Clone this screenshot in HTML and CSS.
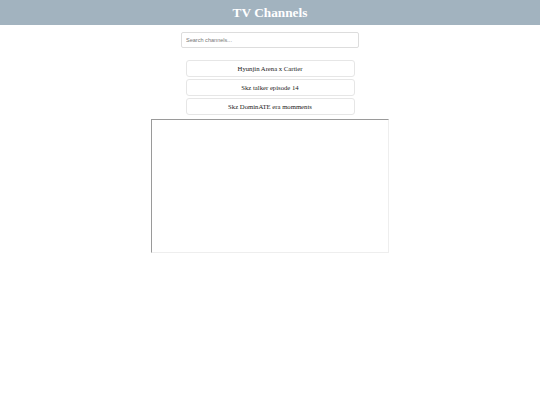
FILE: index.html
```html
<!DOCTYPE html>
<html lang="en">
<head>
<meta charset="utf-8">
<title>TV Channels</title>
<link rel="stylesheet" href="styles.css">
</head>
<body>
<header class="topbar">
  <h1 class="title">TV Channels</h1>
</header>
<main class="content">
  <input class="search" type="text" placeholder="Search channels...">
  <div class="channels">
    <button class="channel">Hyunjin Arena x Cartier</button>
    <button class="channel">Skz talker episode 14</button>
    <button class="channel">Skz DominATE era momments</button>
  </div>
  <iframe class="player" title="player"></iframe>
</main>
</body>
</html>
```

FILE: styles.css
```css
html, body {
  margin: 0;
  padding: 0;
  background: #ffffff;
}

body {
  font-family: "Liberation Serif", "Times New Roman", serif;
}

.topbar {
  height: 25px;
  background: #a2b3bf;
  display: flex;
  align-items: center;
  justify-content: center;
}

.title {
  margin: 0;
  color: #ffffff;
  font-size: 13.3px;
  font-weight: bold;
  line-height: 1;
}

.content {
  display: flex;
  flex-direction: column;
  align-items: center;
}

.search {
  box-sizing: border-box;
  margin-top: 7px;
  width: 178px;
  height: 16px;
  padding: 0 0 0 4px;
  border: 1px solid #dddddd;
  border-radius: 2px;
  font-family: "Liberation Sans", Arial, sans-serif;
  font-size: 5.55px;
  outline: none;
}

.search::placeholder {
  color: #777777;
}

.channels {
  margin-top: 12px;
  display: flex;
  flex-direction: column;
  gap: 2px;
}

.channel {
  box-sizing: border-box;
  width: 169px;
  height: 17px;
  padding: 0;
  border: 1px solid #e6e6e6;
  border-radius: 3px;
  background: #ffffff;
  color: #222222;
  font-family: "Liberation Serif", "Times New Roman", serif;
  font-size: 6.7px;
}

.player {
  box-sizing: border-box;
  margin-top: 4px;
  width: 238px;
  height: 134px;
  border: 1px solid;
  border-color: #9a9a9a #eeeeee #eeeeee #9a9a9a;
  background: #ffffff;
}
```
